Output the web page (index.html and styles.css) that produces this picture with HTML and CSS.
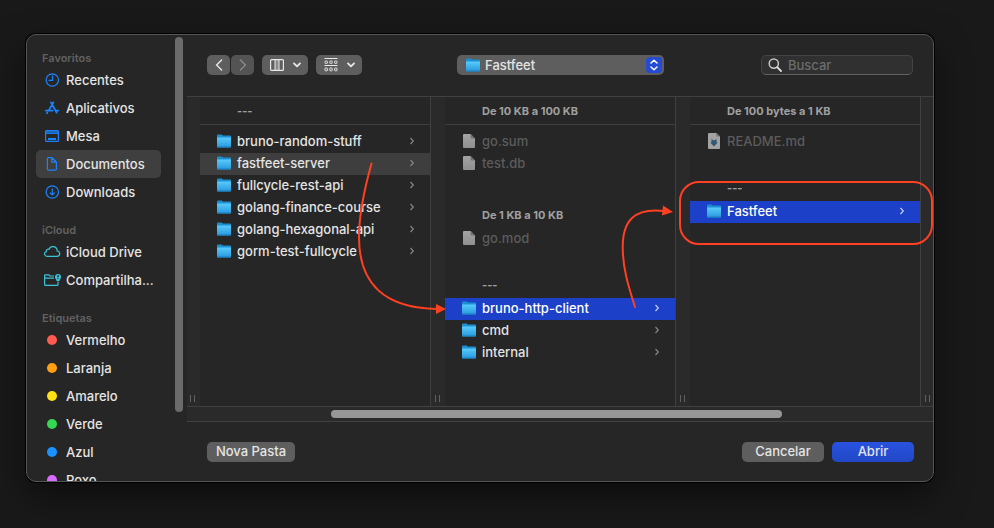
FILE: index.html
```html
<!DOCTYPE html>
<html lang="pt-BR">
<head>
<meta charset="utf-8">
<title>Abrir</title>
<link rel="stylesheet" href="styles.css">
</head>
<body>
<svg class="defs" aria-hidden="true">
  <defs>
    <linearGradient id="folder-front" x1="0" y1="0" x2="0" y2="1">
      <stop offset="0" stop-color="#5accfc"/>
      <stop offset="1" stop-color="#2597dc"/>
    </linearGradient>
    <linearGradient id="paper" x1="0" y1="0" x2="0" y2="1">
      <stop offset="0" stop-color="#a3a3a3"/>
      <stop offset="1" stop-color="#8f8f8f"/>
    </linearGradient>
    <symbol id="folder" viewBox="0 0 14 14">
      <path d="M0 1.6Q0 .6 1 .6H4.6L6 1.6H13Q14 1.6 14 2.6V6H0Z" fill="#1d8fd0"/>
      <path d="M0 3.4H14V12.600Q14 13.600 13 13.600H1Q0 13.600 0 12.600Z" fill="url(#folder-front)"/>
      <path d="M.2 13H13.8" stroke="#1c7fbd" stroke-width="1"/>
    </symbol>
    <symbol id="file" viewBox="0 0 14 14">
      <path d="M2 0H8.6L13 4.4V13Q13 14 12 14H2Q1 14 1 13V1Q1 0 2 0Z" fill="url(#paper)"/>
      <path d="M8.6 0L13 4.4H9.4Q8.6 4.4 8.6 3.6Z" fill="#707070"/>
    </symbol>
    <symbol id="markdown" viewBox="0 0 14 16">
      <path d="M2 0H9.4L13 3.6V15Q13 16 12 16H2Q1 16 1 15V1Q1 0 2 0Z" fill="#a3a3a3"/>
      <path d="M9.4 0L13 3.6H9.4Z" fill="#707070"/>
      <path d="M4.4 6L7 7.4L9.6 6V9.6H10.8L7 13.6L3.2 9.6H4.4Z" fill="#315a70"/>
    </symbol>
    <symbol id="chevron" viewBox="0 0 6 8">
      <path d="M1.5 1L4.3 4L1.5 7" fill="none" stroke="currentColor" stroke-width="1.2"/>
    </symbol>
    <symbol id="down" viewBox="0 0 8 6">
      <path d="M1 1.4L4 4.4L7 1.4" fill="none" stroke="currentColor" stroke-width="1.8" stroke-linecap="round" stroke-linejoin="round"/>
    </symbol>
  </defs>
</svg>

<main class="dialog">
  <nav class="sidebar" aria-label="Locais">
    <div class="places">
      <h2 class="places-title">Favoritos</h2>
      <a class="place" href="#recentes">
        <svg class="place-icon" viewBox="0 0 20 16"><g fill="none" stroke="currentColor" stroke-width="1.2"><circle cx="10.3" cy="8" r="6.2"/><path d="M10.5 3.5V8.4H6.6"/></g></svg>
        Recentes</a>
      <a class="place" href="#aplicativos">
        <svg class="place-icon" viewBox="0 0 20 16"><g fill="none" stroke="currentColor" stroke-width="1.8" stroke-linecap="round"><path d="M11.4 2.4L6.6 10.6M9 2.4L14.6 12.6M3.8 10.6H10.6M13.8 10.6H16.2M5.3 12.8L5 13.2"/></g></svg>
        Aplicativos</a>
      <a class="place" href="#mesa">
        <svg class="place-icon" viewBox="0 0 20 16"><path d="M3.2 3H16.8V5H3.2Z" fill="currentColor" opacity=".6"/><rect x="3.6" y="2.6" width="12.8" height="10.8" rx="1" fill="none" stroke="currentColor" stroke-width="1.2"/><path d="M3.6 5.4H16.4" stroke="currentColor"/><path d="M6 10H14V12H6Z" fill="currentColor"/></svg>
        Mesa</a>
      <a class="place place-current" href="#documentos" aria-current="page">
        <svg class="place-icon" viewBox="0 0 20 16"><path d="M6 1.6H10L14.4 6V13Q14.4 14.2 13.2 14.2H6.6Q5.4 14.2 5.4 13V2.8Q5.4 1.6 6.6 1.6M9.8 1.8V6.2H14.2M10 1.8L14.2 6" fill="none" stroke="currentColor" stroke-width="1.2"/></svg>
        Documentos</a>
      <a class="place" href="#downloads">
        <svg class="place-icon" viewBox="0 0 20 16"><g fill="none" stroke="currentColor" stroke-width="1.2"><circle cx="10.3" cy="8" r="6.2"/><path d="M10.3 4.6V11M7.8 8.6L10.3 11L12.8 8.6"/></g></svg>
        Downloads</a>

      <h2 class="places-title">iCloud</h2>
      <a class="place place-cloud" href="#icloud">
        <svg class="place-icon" viewBox="0 0 20 16"><path d="M5.4 12.4H14.8C18.6 12.2 18.6 7.4 15.2 7C15 1.8 8.4 1.2 7.2 5.2C5.4 4.8 4 6 4.4 7.6C1.6 8.4 2 12.2 5.4 12.4Z" fill="none" stroke="currentColor" stroke-width="1.2"/></svg>
        iCloud Drive</a>
      <a class="place place-cloud" href="#compartilhado">
        <svg class="place-icon" viewBox="0 0 20 16"><path d="M12 4H8L6.8 2.8H3.4Q2.6 2.8 2.6 3.6V12.4Q2.6 13.4 3.6 13.4H15Q16 13.4 16 12.4V9.6M2.6 6.2H12" fill="none" stroke="currentColor" stroke-width="1.2"/><circle cx="16" cy="5" r="3" fill="currentColor"/><path d="M14.4 7H17.6V9H14.4Z" fill="currentColor"/><circle cx="16" cy="4.2" r="1" fill="#262626"/><path d="M14.6 6.8Q16 5 17.4 6.8Z" fill="#262626"/></svg>
        Compartilha...</a>

      <h2 class="places-title">Etiquetas</h2>
      <a class="place" href="#vermelho"><span class="dot dot-red"></span>Vermelho</a>
      <a class="place" href="#laranja"><span class="dot dot-orange"></span>Laranja</a>
      <a class="place" href="#amarelo"><span class="dot dot-yellow"></span>Amarelo</a>
      <a class="place" href="#verde"><span class="dot dot-green"></span>Verde</a>
      <a class="place" href="#azul"><span class="dot dot-blue"></span>Azul</a>
      <a class="place" href="#roxo"><span class="dot dot-purple"></span>Roxo</a>
    </div>
    <div class="sidebar-thumb"></div>
  </nav>

  <section class="browser">
    <header class="toolbar">
      <div class="tools">
        <div class="history">
          <button class="tool tool-nav" type="button" aria-label="Voltar"><svg width="8" height="12" viewBox="0 0 8 12"><path d="M6.6 1L1.6 6L6.6 11" fill="none" stroke="currentColor" stroke-width="1.4" stroke-linecap="round"/></svg></button>
          <button class="tool tool-nav" type="button" aria-label="Avançar" disabled><svg width="8" height="12" viewBox="0 0 8 12"><path d="M1.4 1L6.4 6L1.4 11" fill="none" stroke="currentColor" stroke-width="1.4" stroke-linecap="round"/></svg></button>
        </div>
        <button class="tool" type="button" aria-label="Visualização">
          <svg width="14" height="12" viewBox="0 0 14 12"><path d="M5 1H9V11H5Z" fill="#8a8a8a"/><rect x=".6" y=".6" width="12.8" height="10.8" rx="1" fill="none" stroke="currentColor" stroke-width="1.2"/><path d="M5 1V11M9 1V11" stroke="currentColor"/></svg>
          <svg width="8" height="6"><use href="#down"/></svg>
        </button>
        <button class="tool" type="button" aria-label="Agrupar">
          <svg width="14" height="14" viewBox="0 0 14 14"><g fill="none" stroke="currentColor"><path d="M.5 .5H13.5M.5 7.500H13.5"/><rect x="1" y="3" width="2.4" height="2.4" rx=".6"/><rect x="5.8" y="3" width="2.4" height="2.4" rx=".6"/><rect x="10.6" y="3" width="2.4" height="2.4" rx=".6"/><rect x="1" y="10" width="2.4" height="2.8" rx=".6"/><rect x="5.8" y="10" width="2.4" height="2.8" rx=".6"/><rect x="10.6" y="10" width="2.4" height="2.8" rx=".6"/></g></svg>
          <svg width="8" height="6"><use href="#down"/></svg>
        </button>
      </div>
      <div class="location">
        <svg class="location-icon" width="14" height="14"><use href="#folder"/></svg>
        <select class="location-select" aria-label="Pasta"><option>Fastfeet</option></select>
        <span class="stepper"><svg width="8" height="12" viewBox="0 0 8 12"><path d="M1 4L4 1.2L7 4M1 8L4 10.8L7 8" fill="none" stroke="#fff" stroke-width="1.5" stroke-linecap="round" stroke-linejoin="round"/></svg></span>
      </div>
      <div class="search">
        <svg class="search-icon" width="14" height="14" viewBox="0 0 14 14"><circle cx="5.8" cy="5.6" r="4.6" fill="none" stroke="#c4c4c4" stroke-width="1.5"/><path d="M9.2 9.2L13 13" stroke="#e0e0e0" stroke-width="1.8" stroke-linecap="round"/></svg>
        <input class="search-input" type="text" placeholder="Buscar" aria-label="Buscar">
      </div>
    </header>

    <div class="columns">
      <div class="gutter gutter-first"><span class="grip"></span></div>
      <div class="column">
        <h3 class="group-title group-title-top">---</h3>
        <div class="group">
          <a class="row" href="#1"><svg class="row-icon"><use href="#folder"/></svg>bruno-random-stuff<svg class="row-more"><use href="#chevron"/></svg></a>
          <a class="row row-open" href="#2"><svg class="row-icon"><use href="#folder"/></svg>fastfeet-server<svg class="row-more"><use href="#chevron"/></svg></a>
          <a class="row" href="#3"><svg class="row-icon"><use href="#folder"/></svg>fullcycle-rest-api<svg class="row-more"><use href="#chevron"/></svg></a>
          <a class="row" href="#4"><svg class="row-icon"><use href="#folder"/></svg>golang-finance-course<svg class="row-more"><use href="#chevron"/></svg></a>
          <a class="row" href="#5"><svg class="row-icon"><use href="#folder"/></svg>golang-hexagonal-api<svg class="row-more"><use href="#chevron"/></svg></a>
          <a class="row" href="#6"><svg class="row-icon"><use href="#folder"/></svg>gorm-test-fullcycle<svg class="row-more"><use href="#chevron"/></svg></a>
        </div>
      </div>
      <div class="gutter"><span class="grip"></span></div>
      <div class="column">
        <h3 class="group-title group-title-top">De 10 KB a 100 KB</h3>
        <div class="group group-long">
          <span class="row row-disabled"><svg class="row-icon"><use href="#file"/></svg>go.sum</span>
          <span class="row row-disabled"><svg class="row-icon"><use href="#file"/></svg>test.db</span>
        </div>
        <h3 class="group-title">De 1 KB a 10 KB</h3>
        <div class="group">
          <span class="row row-disabled"><svg class="row-icon"><use href="#file"/></svg>go.mod</span>
        </div>
        <h3 class="group-title">---</h3>
        <div class="group">
          <a class="row row-selected" href="#7"><svg class="row-icon"><use href="#folder"/></svg>bruno-http-client<svg class="row-more"><use href="#chevron"/></svg></a>
          <a class="row" href="#8"><svg class="row-icon"><use href="#folder"/></svg>cmd<svg class="row-more"><use href="#chevron"/></svg></a>
          <a class="row" href="#9"><svg class="row-icon"><use href="#folder"/></svg>internal<svg class="row-more"><use href="#chevron"/></svg></a>
        </div>
      </div>
      <div class="gutter"><span class="grip"></span></div>
      <div class="column">
        <h3 class="group-title group-title-top">De 100 bytes a 1 KB</h3>
        <div class="group">
          <span class="row row-disabled"><svg class="row-icon row-icon-tall"><use href="#markdown"/></svg>README.md</span>
        </div>
        <h3 class="group-title">---</h3>
        <div class="group">
          <a class="row row-selected" href="#10"><svg class="row-icon"><use href="#folder"/></svg>Fastfeet<svg class="row-more"><use href="#chevron"/></svg></a>
        </div>
      </div>
      <div class="gutter gutter-last"><span class="grip"></span></div>
    </div>

    <div class="scroll-track"><div class="scroll-thumb"></div></div>

    <footer class="actions">
      <button class="action action-new" type="button">Nova Pasta</button>
      <button class="action" type="button">Cancelar</button>
      <button class="action action-primary" type="button">Abrir</button>
    </footer>
  </section>
</main>

<svg class="notes" width="994" height="528" viewBox="0 0 994 528" aria-hidden="true">
  <g fill="none" stroke="#ff4022" stroke-width="2" stroke-linecap="round">
    <path d="M371.500 163.500C363 194 359 215 359 237C359 284 384 308 437 309"/>
    <path d="M635 307C628 285 622.700 268 622.700 247C622.700 221 634 207.500 664 211"/>
    <rect x="680" y="182" width="252" height="62" rx="19"/>
  </g>
  <path d="M436 304L446 309L436 314Z" fill="#ff4022"/>
  <path d="M663 205.500L673 212L662 215.500Z" fill="#ff4022"/>
</svg>
</body>
</html>
```
FILE: styles.css
```css
* {
  box-sizing: border-box;
}

body {
  display: flex;
  position: relative;
  height: 100vh;
  margin: 0;
  padding: 34px 60px 46px 26px;
  overflow: hidden;
  background: #191919;
  color: #e4e4e4;
  font: 450 13px/16px Inter, "Liberation Sans", sans-serif;
}

a {
  color: inherit;
  text-decoration: none;
}

button,
input,
select {
  margin: 0;
  border: 0;
  color: inherit;
  font: inherit;
}

svg {
  display: block;
  flex: none;
}

.defs {
  position: absolute;
  width: 0;
  height: 0;
}

.dialog {
  display: flex;
  flex: 1;
  min-width: 0;
  overflow: hidden;
  border: 1px solid #565656;
  border-radius: 10px;
  background: #262626;
  box-shadow: 0 0 0 1px #000, 0 14px 34px rgba(0, 0, 0, 0.5);
}

/* Sidebar */

.sidebar {
  display: flex;
  flex: none;
  gap: 14px;
  width: 160px;
  padding: 0 4px 0 9px;
}

.places {
  flex: 1;
  min-width: 0;
  padding-top: 15px;
}

.places-title {
  margin: 16px 0 0;
  padding-left: 6px;
  color: #616161;
  font-size: 11px;
  font-weight: 600;
  line-height: 16px;
}

.places-title:first-child {
  margin-top: 0;
}

.place {
  display: flex;
  align-items: center;
  gap: 4px;
  height: 28px;
  padding-left: 6px;
  border-radius: 5px;
  white-space: nowrap;
}

.place-current {
  background: #3f3f3f;
}

.place-icon {
  width: 20px;
  height: 16px;
  color: #1a84ff;
}

.place-cloud .place-icon {
  color: #3cc4dc;
}

.dot {
  width: 10px;
  height: 10px;
  margin: 0 5px;
  border-radius: 50%;
}

.dot-red { background: #ff5b50; }
.dot-orange { background: #ffa014; }
.dot-yellow { background: #ffe014; }
.dot-green { background: #35d855; }
.dot-blue { background: #1a92ff; }
.dot-purple { background: #d76cff; }

.sidebar-thumb {
  width: 8px;
  height: 84%;
  margin-top: 2px;
  border-radius: 4px;
  background: #6b6b6b;
}

/* Toolbar */

.browser {
  display: flex;
  flex: 1;
  flex-direction: column;
  min-width: 0;
}

.toolbar {
  display: grid;
  grid-template-columns: 250px minmax(0, 1fr) 152px;
  align-items: center;
  height: 62px;
  padding: 0 20px 1px;
  border-bottom: 1px solid #404040;
}

.tools {
  display: flex;
  gap: 8px;
}

.history {
  display: flex;
  gap: 1px;
}

.tool {
  display: flex;
  align-items: center;
  justify-content: center;
  gap: 9px;
  width: 46px;
  height: 20px;
  padding: 0;
  border-radius: 5px;
  background: #5e5e5e;
  color: #e8e8e8;
}

.tool-nav {
  width: 23px;
}

.tool:disabled {
  background: #545454;
  color: #8a8a8a;
}

.location {
  position: relative;
  margin-right: 97px;
}

.location-icon {
  position: absolute;
  top: 3px;
  left: 9px;
  pointer-events: none;
}

.location-select {
  display: block;
  width: 100%;
  height: 20px;
  padding: 0 24px 1px 28px;
  border-radius: 5px;
  appearance: none;
  background: #5e5e5e;
}

.stepper {
  display: flex;
  position: absolute;
  top: 2px;
  right: 2px;
  align-items: center;
  justify-content: center;
  width: 16px;
  height: 16px;
  border-radius: 4px;
  background: #244bd2;
  pointer-events: none;
}

.search {
  position: relative;
}

.search-icon {
  position: absolute;
  top: 3px;
  left: 7px;
}

.search-input {
  display: block;
  width: 100%;
  height: 20px;
  padding: 0 6px 0 26px;
  border: 1px solid #434343;
  border-bottom-color: #626262;
  border-radius: 5px;
  background: #303030;
}

.search-input::placeholder {
  color: #6c6c6c;
}

/* Column view */

.columns {
  display: flex;
  flex: 1;
  min-height: 0;
}

.gutter {
  display: flex;
  flex: none;
  align-items: flex-end;
  width: 15px;
  padding: 0 0 4px 4px;
  border-left: 1px solid #404040;
  background: #2a2a2a;
}

.gutter-first {
  width: 13px;
  padding-left: 3px;
  border-left: 0;
}

.gutter-last {
  width: 13px;
}

.grip {
  width: 5px;
  height: 7px;
  border: solid #606060;
  border-width: 0 1px;
}

.column {
  flex: 1;
  min-width: 0;
  background: #262626;
}

.group-title {
  margin: 0;
  padding: 0 0 2px 37px;
  color: #a0a0a0;
  font-size: 11px;
  font-weight: 700;
  line-height: 22px;
}

.group-title-top {
  margin-bottom: 6px;
  padding: 2px 0 1px 37px;
  border-bottom: 1px solid #404040;
  line-height: 24px;
}

.group {
  padding-bottom: 24px;
}

.group-long {
  padding-bottom: 29px;
}

.row {
  display: flex;
  align-items: center;
  gap: 6px;
  height: 22px;
  padding: 0 15px 2px 17px;
  white-space: nowrap;
}

.row-open {
  background: #3e3e3e;
}

.row-selected {
  background: #1c40c8;
  color: #fff;
}

.row-disabled {
  color: #5c5c5c;
}

.row-icon {
  width: 14px;
  height: 14px;
}

.row-icon-tall {
  height: 16px;
}

.row-more {
  width: 6px;
  height: 8px;
  margin-left: auto;
  color: #858585;
}

.row-selected .row-more {
  color: #c6cff2;
}

.scroll-track {
  display: grid;
  grid-template-columns: 144fr 451fr 151fr;
  align-items: center;
  height: 16px;
  border: solid #404040;
  border-width: 1px 0;
  background: #2a2a2a;
}

.scroll-thumb {
  grid-column: 2;
  height: 8px;
  border-radius: 4px;
  background: #979797;
}

/* Footer */

.actions {
  display: flex;
  gap: 8px;
  align-items: center;
  height: 59px;
  padding: 0 19px 0 20px;
}

.action {
  width: 82px;
  height: 20px;
  padding: 0 0 1px;
  border-radius: 5px;
  background: #5e5e5e;
}

.action-new {
  width: 88px;
  margin-right: auto;
}

.action-primary {
  background: linear-gradient(#2853e0, #2147c4);
}

/* Hand-drawn arrows and outline over the dialog */

.notes {
  position: absolute;
  top: 0;
  left: 0;
  pointer-events: none;
}
```
